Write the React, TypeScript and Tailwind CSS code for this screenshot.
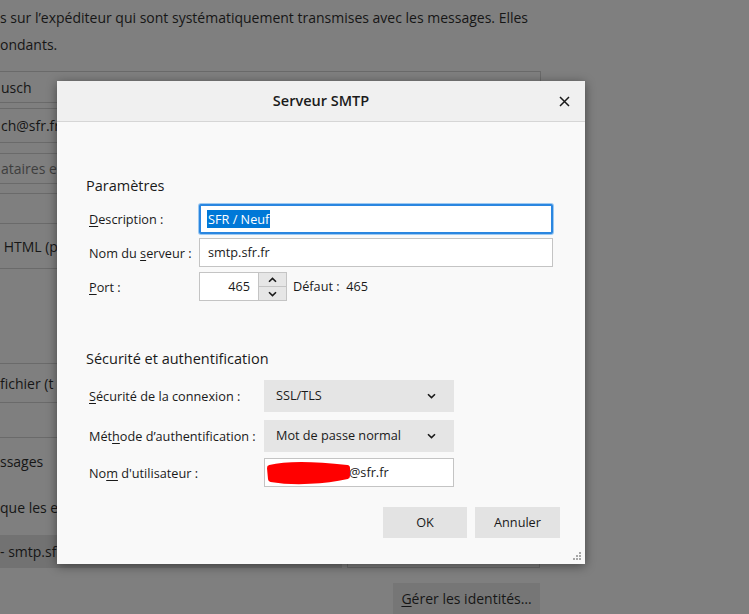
import React from "react";

const font = { fontFamily: '"Open Sans", "Noto Sans", sans-serif' };

const Chevron = ({ up = false }: { up?: boolean }) => (
  <svg width="9" height="6" viewBox="0 0 9 6" className={up ? "rotate-180" : ""}>
    <path d="M1 1.2 L4.5 4.6 L8 1.2" fill="none" stroke="#1a1a1a" strokeWidth="1.6" />
  </svg>
);

const Label = ({ before, u, after }: { before: string; u: string; after: string }) => (
  <span>
    {before}
    <span className="underline underline-offset-2">{u}</span>
    {after}
  </span>
);

const Background = () => {
  const box = "ml-[-2px] w-[543px] border border-[#6a6a6a] flex items-center text-[14px] whitespace-nowrap";
  return (
    <div className="h-[614px] w-full bg-[#7f7f7f] text-[#161616] overflow-hidden" style={font}>
      <div className="pt-[4px] text-[14px] leading-[27px] whitespace-nowrap">
        <p>s sur l’expéditeur qui sont systématiquement transmises avec les messages. Elles</p>
        <p>ondants.</p>
      </div>
      <div className={`${box} mt-[13px] h-[32px]`}>
        <span className="pl-[2px]">usch</span>
      </div>
      <div className={`${box} mt-[5px] h-[35px]`}>
        <span className="pl-[2px]">ch@sfr.fr</span>
      </div>
      <div className={`${box} mt-[10px] h-[31px] text-[#3e3e3e]`}>
        <span className="pl-[2px]">ataires e</span>
      </div>
      <div className={`${box} mt-[9px] h-[31px]`} />
      <div className="ml-[-2px] w-[543px] h-[45px] border-b border-[#6a6a6a] flex items-center text-[14px] whitespace-nowrap">
        <span className="pl-[2px]">&nbsp;HTML (p</span>
      </div>
      <div className="h-[94px]" />
      <div className="ml-[-2px] w-[543px] h-[40px] border-y border-[#6a6a6a] flex items-center text-[14px] whitespace-nowrap">
        <span className="pl-[2px]">fichier (t</span>
      </div>
      <div className="ml-[-2px] w-[543px] h-[35px] border-b border-[#6a6a6a]" />
      <div className="h-[47px] flex items-center text-[14px]">ssages</div>
      <div className="h-[45px] flex items-center text-[14px] whitespace-nowrap">que les e</div>
      <div className="mt-[5px] flex h-[33px]">
        <div className="w-[342px] bg-[#727272] flex items-center text-[14px] whitespace-nowrap">- smtp.sfr</div>
        <div className="ml-[5px] w-[193px] border border-[#6a6a6a]" />
      </div>
      <div className="mt-[15px] flex justify-end w-[540px]">
        <div className="w-[147px] h-[31px] bg-[#767676] flex items-center justify-center text-[14px]">
          <Label before="" u="G" after="érer les identités…" />
        </div>
      </div>
    </div>
  );
};

const Dialog = () => (
  <div
    className="absolute left-[57px] top-[81px] w-[528px] h-[483px] flex flex-col bg-[#f9f9f9] shadow-[0_2px_10px_rgba(0,0,0,0.45)] text-[#1a1a1a] text-[12.7px]"
    style={font}
  >
    <div className="relative h-[41px] shrink-0 bg-[#f0f0f0] border-b border-[#d6d6d6] flex items-center justify-center">
      <span className="text-[14.5px] font-semibold">Serveur SMTP</span>
      <button className="absolute right-[15px] top-[14px] w-[12px] h-[12px] flex items-center justify-center">
        <svg width="11" height="11" viewBox="0 0 11 11">
          <path d="M1 1 L10 10 M10 1 L1 10" stroke="#1a1a1a" strokeWidth="1.5" />
        </svg>
      </button>
    </div>

    <div className="relative flex-1 pl-[29px] pr-[32px] pt-[54px]">
      <h2 className="text-[14.5px] font-medium leading-[20px]">Paramètres</h2>

      <div className="mt-[8px] flex flex-col">
        <div className="flex items-center h-[30px]">
          <div className="w-[113px] pl-[3px] pt-[2px]">
            <Label before="" u="D" after="escription :" />
          </div>
          <div className="flex-1 h-[30px] bg-white border-2 border-[#2a86e0] rounded-[2px] shadow-[0_0_0_1px_#9cc9f2] flex items-center pl-[6px]">
            <span className="bg-[#0078d7] text-white leading-[18px] px-[1px]">SFR / Neuf</span>
          </div>
        </div>
        <div className="flex items-center h-[29px] mt-[4px]">
          <div className="w-[113px] pl-[3px] pt-[2px]">
            <Label before="Nom du " u="s" after="erveur :" />
          </div>
          <div className="flex-1 h-[29px] bg-white border border-[#c4c4c4] flex items-center pl-[8px]">
            smtp.sfr.fr
          </div>
        </div>
        <div className="flex items-center h-[29px] mt-[5px]">
          <div className="w-[113px] pl-[3px] pt-[2px]">
            <Label before="" u="P" after="ort :" />
          </div>
          <div className="w-[88px] h-[29px] bg-white border border-[#c4c4c4] flex">
            <div className="flex-1 flex items-center justify-end pr-[8px]">465</div>
            <div className="w-[28px] flex flex-col border-l border-[#c4c4c4] bg-[#e6e6e6]">
              <div className="flex-1 flex items-center justify-center border-b border-[#c4c4c4]">
                <Chevron up />
              </div>
              <div className="flex-1 flex items-center justify-center">
                <Chevron />
              </div>
            </div>
          </div>
          <span className="ml-[6px]">Défaut :&nbsp; 465</span>
        </div>
      </div>

      <h2 className="mt-[48px] text-[14.5px] font-medium leading-[20px]">Sécurité et authentification</h2>

      <div className="mt-[11px] flex flex-col">
        <div className="flex items-center h-[32px]">
          <div className="w-[178px] pl-[3px] pt-[2px]">
            <Label before="" u="S" after="écurité de la connexion :" />
          </div>
          <div className="w-[190px] h-[32px] bg-[#e5e5e5] flex items-center justify-between pl-[12px] pr-[18px]">
            <span>SSL/TLS</span>
            <Chevron />
          </div>
        </div>
        <div className="flex items-center h-[32px] mt-[8px]">
          <div className="w-[178px] pl-[3px] pt-[2px]">
            <Label before="Mét" u="h" after="ode d’authentification :" />
          </div>
          <div className="w-[190px] h-[32px] bg-[#e5e5e5] flex items-center justify-between pl-[12px] pr-[18px]">
            <span>Mot de passe normal</span>
            <Chevron />
          </div>
        </div>
        <div className="flex items-center h-[29px] mt-[6px]">
          <div className="w-[178px] pl-[3px] pt-[2px]">
            <Label before="No" u="m" after=" d'utilisateur :" />
          </div>
          <div className="w-[190px] h-[29px] bg-white border border-[#c4c4c4] flex items-center">
            <svg width="86" height="27" viewBox="0 0 86 27" className="shrink-0">
              <path
                d="M5 9 C 25 4, 55 6, 82 9 L 82 17 C 60 22, 30 24, 6 20 Z"
                fill="#ff0000"
                stroke="#ff0000"
                strokeWidth="6"
                strokeLinejoin="round"
              />
            </svg>
            <span className="-ml-[2px]">@sfr.fr</span>
          </div>
        </div>
      </div>

      <div className="mt-[20px] -mr-[7px] flex justify-end gap-[8px]">
        <button className="w-[84px] h-[31px] bg-[#e3e3e3] flex items-center justify-center">OK</button>
        <button className="w-[85px] h-[31px] bg-[#e3e3e3] flex items-center justify-center">Annuler</button>
      </div>

      <svg width="10" height="10" viewBox="0 0 10 10" className="absolute right-[3px] bottom-[3px]">
        <g fill="#a8a8a8">
          <rect x="7" y="1" width="2" height="2" />
          <rect x="4" y="4" width="2" height="2" />
          <rect x="7" y="4" width="2" height="2" />
          <rect x="1" y="7" width="2" height="2" />
          <rect x="4" y="7" width="2" height="2" />
          <rect x="7" y="7" width="2" height="2" />
        </g>
      </svg>
    </div>
  </div>
);

export default function App() {
  return (
    <div className="relative w-[749px] h-[614px] overflow-hidden">
      <Background />
      <Dialog />
    </div>
  );
}
